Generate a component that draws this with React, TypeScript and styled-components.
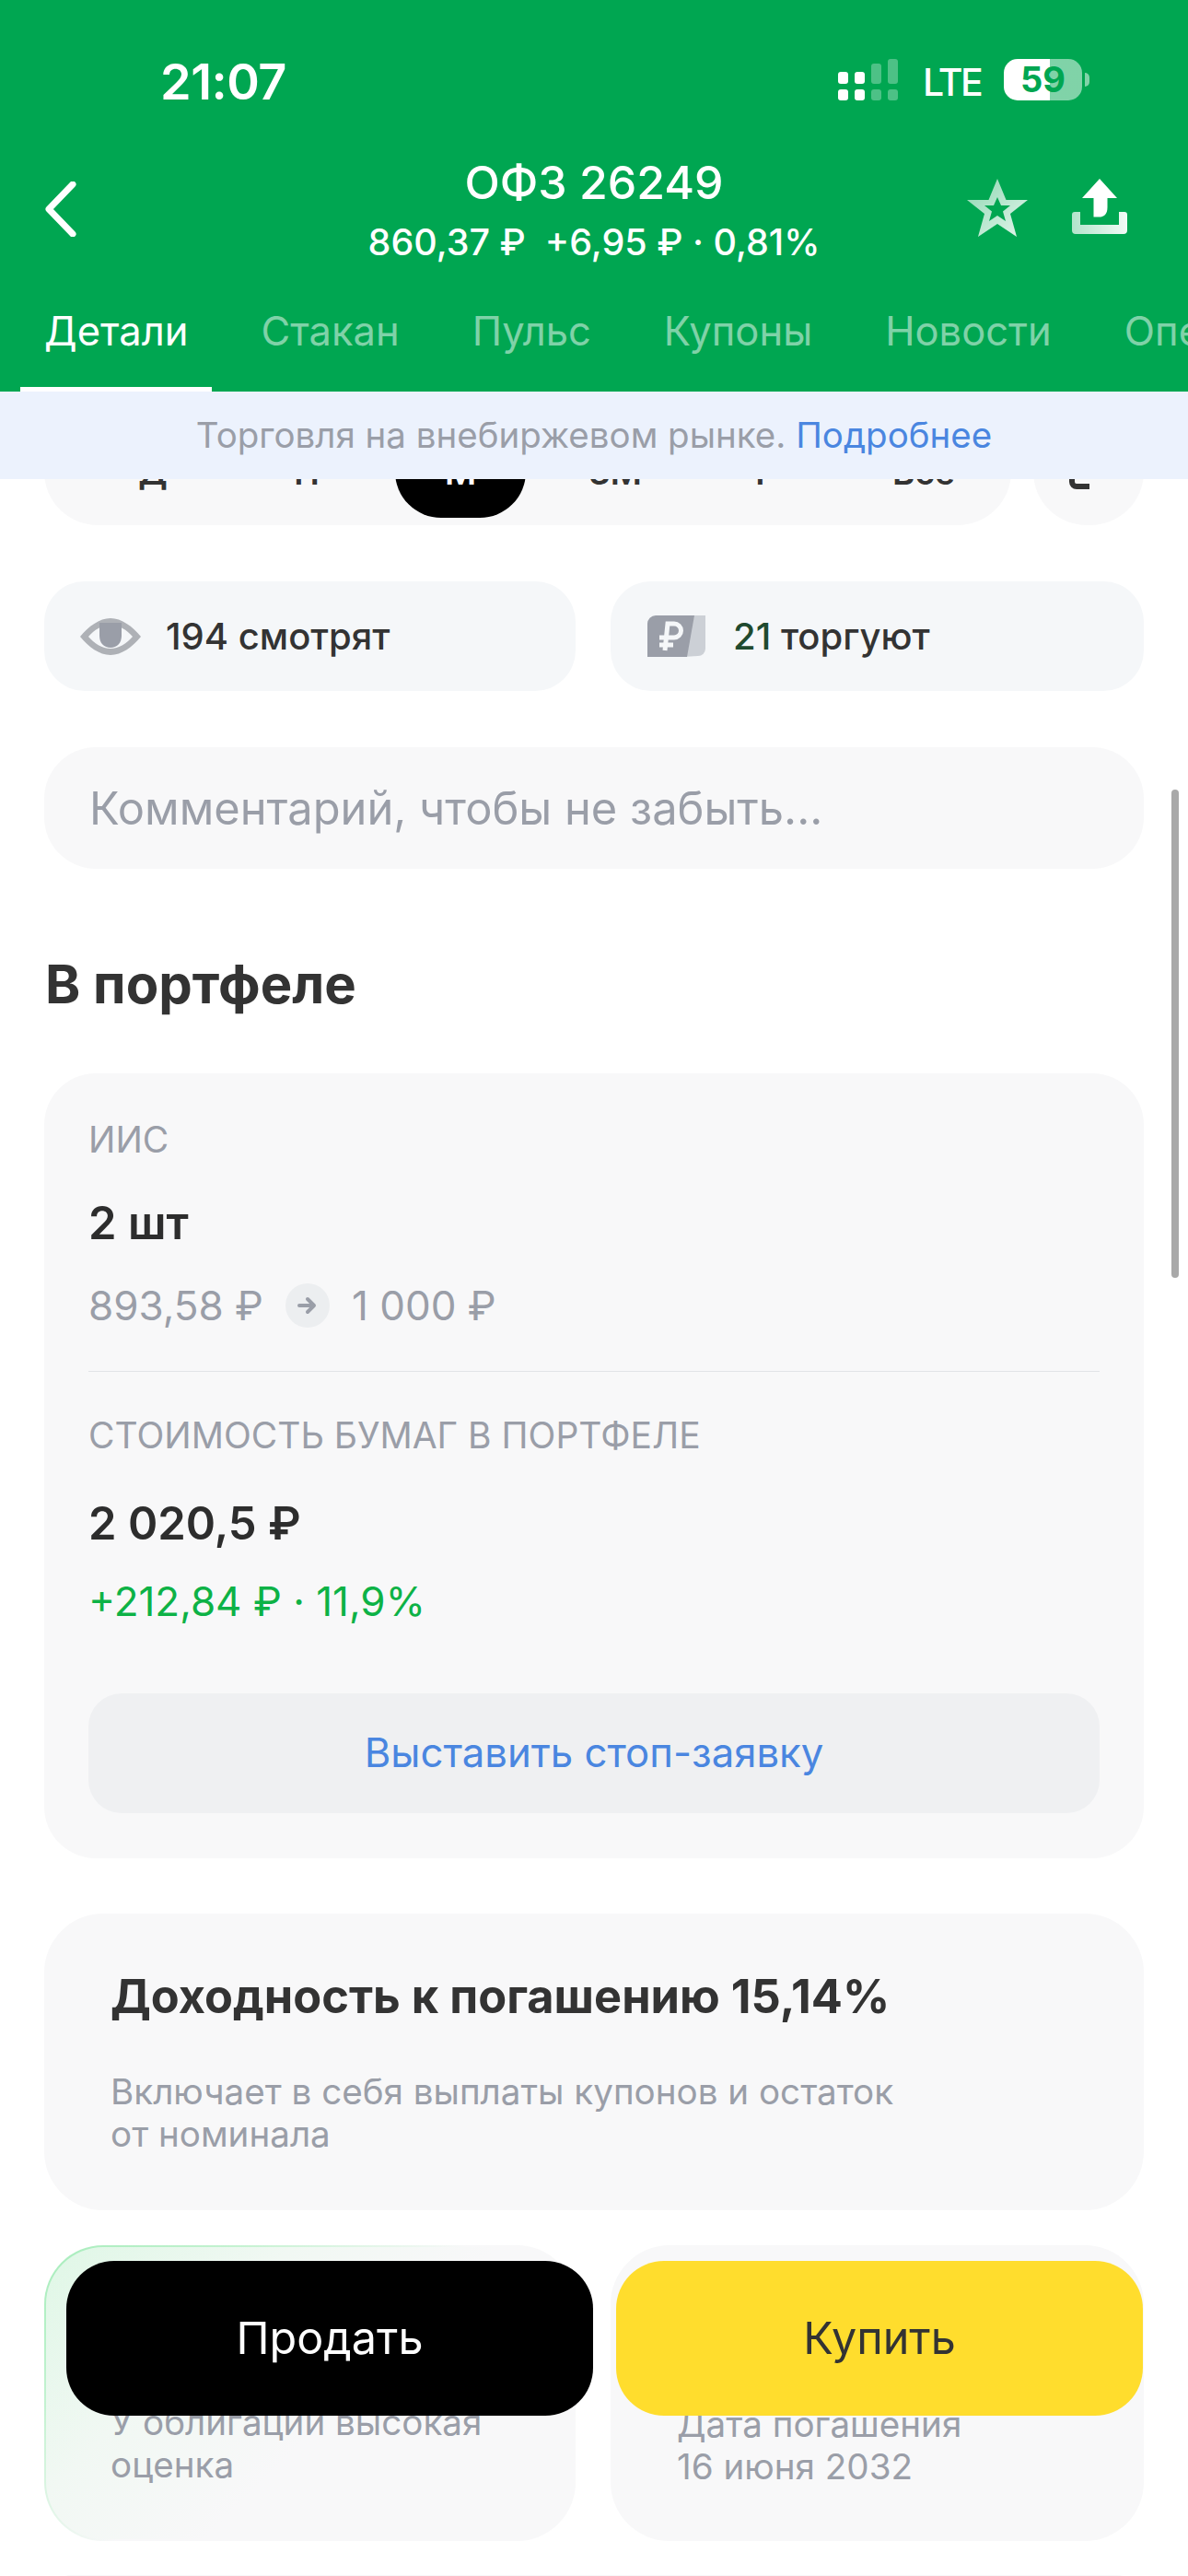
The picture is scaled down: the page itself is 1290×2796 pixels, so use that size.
import React from "react";
import styled, { createGlobalStyle } from "styled-components";

const Global = createGlobalStyle`
  html, body { margin: 0; padding: 0; background: #fff; }
  body { font-family: Inter, "Noto Sans", sans-serif; color: #333; }
  * { box-sizing: border-box; }
`;

const Page = styled.div`
  position: relative;
  width: 1290px;
  height: 2796px;
  overflow: hidden;
  background: #fff;
`;

const Top = styled.header`
  position: relative;
  z-index: 2;
  background: #00a651;
  height: 425px;
  color: #fff;
  display: flex;
  flex-direction: column;
`;

const StatusBar = styled.div`
  height: 172px;
  padding: 64px 115px 0 174px;
  display: flex;
  justify-content: space-between;
  align-items: flex-start;
`;

const Time = styled.div`
  font-size: 54px;
  line-height: 50px;
  font-weight: 600;
  letter-spacing: -0.5px;
`;

const StatusRight = styled.div`
  display: flex;
  align-items: center;
  height: 45px;
`;

const Lte = styled.div`
  font-size: 41px;
  line-height: 45px;
  font-weight: 500;
  margin: 5px 27px 0 27px;
  width: 61px;
  letter-spacing: -2.5px;
  white-space: nowrap;
`;

const Battery = styled.div`
  width: 85px;
  height: 45px;
  border-radius: 15px;
  background: linear-gradient(90deg, #fff 0 59%, rgba(255, 255, 255, 0.5) 59% 100%);
  color: #00a651;
  font-size: 38px;
  line-height: 45px;
  font-weight: 700;
  text-align: center;
  position: relative;
  &::after {
    content: "";
    position: absolute;
    left: 88px;
    top: 15px;
    width: 5px;
    height: 15px;
    border-radius: 0 5px 5px 0;
    background: rgba(255, 255, 255, 0.5);
  }
`;

const NavRow = styled.div`
  height: 110px;
  padding: 0 48px;
  display: grid;
  grid-template-columns: 1fr auto 1fr;
  align-items: start;
`;

const Back = styled.div`
  padding-top: 25px;
  display: flex;
`;

const Center = styled.div`
  text-align: center;
  margin-top: -2px;
`;

const Title = styled.div`
  font-size: 50px;
  line-height: 56px;
  font-weight: 500;
`;

const Sub = styled.div`
  font-size: 39.5px;
  line-height: 46px;
  font-weight: 500;
  margin-top: 14px;
  white-space: pre;
`;

const NavActions = styled.div`
  display: flex;
  justify-content: flex-end;
  gap: 48px;
  padding: 22px 18px 0 0;
`;

const Tabs = styled.nav`
  margin-top: 33px;
  padding-left: 22px;
  display: flex;
  gap: 27px;
  overflow: hidden;
  flex: 1;
`;

const Tab = styled.div<{ $active?: boolean }>`
  padding: 17px 26px 0;
  font-size: 43.5px;
  line-height: 54px;
  font-weight: 400;
  white-space: nowrap;
  flex: none;
  color: ${(p) => (p.$active ? "#fff" : "rgba(255,255,255,0.5)")};
  border-bottom: 5px solid ${(p) => (p.$active ? "#fff" : "transparent")};
`;

const Banner = styled.div`
  position: relative;
  z-index: 2;
  height: 95px;
  background: #ecf2fd;
  color: #9a9ea8;
  font-size: 38.5px;
  line-height: 95px;
  text-align: center;
`;

const Link = styled.span`
  color: #4a86e0;
`;

const Content = styled.main`
  padding: 0 48px;
  display: flex;
  flex-direction: column;
`;

const SegRow = styled.div`
  display: flex;
  gap: 24px;
  margin-top: -66px;
`;

const SegTrack = styled.div`
  width: 1050px;
  height: 116px;
  border-radius: 58px;
  background: #f8f8f9;
  position: relative;
`;

const SegItem = styled.div<{ $x: number; $active?: boolean }>`
  position: absolute;
  left: ${(p) => p.$x}px;
  top: 6px;
  width: 142px;
  height: 102px;
  border-radius: 50px;
  text-align: center;
  font-size: 37px;
  font-weight: 600;
  line-height: 106px;
  background: ${(p) => (p.$active ? "#000" : "transparent")};
  color: ${(p) => (p.$active ? "#fff" : "#333")};
`;

const SegSide = styled.div`
  width: 120px;
  height: 116px;
  border-radius: 58px;
  background: #f8f8f9;
  display: flex;
  padding: 66px 0 0 39px;
`;

const Chips = styled.div`
  display: grid;
  grid-template-columns: 577px 579px;
  gap: 38px;
  margin-top: 61px;
`;

const Chip = styled.div`
  height: 119px;
  border-radius: 44px;
  background: #f5f7f9;
  display: flex;
  align-items: center;
  font-size: 40px;
  font-weight: 500;
  color: #333;
`;

const ChipIcon = styled.div<{ $pad: number; $gap: number }>`
  display: flex;
  margin-left: ${(p) => p.$pad}px;
  margin-right: ${(p) => p.$gap}px;
`;

const DarkGreen = styled.span`
  color: #1f4a2f;
`;

const Comment = styled.div`
  margin-top: 61px;
  height: 132px;
  border-radius: 56px;
  background: #f8f8f9;
  padding-left: 49px;
  font-size: 48.8px;
  line-height: 134px;
  color: #9a9ea8;
`;

const Heading = styled.h2`
  margin: 90px 0 62px;
  padding-left: 1px;
  font-size: 58px;
  line-height: 70px;
  font-weight: 700;
  color: #333;
`;

const Card = styled.section`
  background: #f8f8f9;
  border-radius: 56px;
  padding: 47px 48px 49px;
`;

const Label = styled.div<{ $mt?: number }>`
  font-size: 39px;
  line-height: 50px;
  color: #9a9ea8;
  margin-top: ${(p) => p.$mt ?? 0}px;
`;

const Value = styled.div<{ $mt: number }>`
  font-size: 49px;
  line-height: 60px;
  font-weight: 600;
  color: #2d2d2d;
  margin-top: ${(p) => p.$mt}px;
`;

const PriceRow = styled.div`
  margin-top: 35px;
  height: 48px;
  display: flex;
  align-items: center;
  font-size: 44px;
  line-height: 48px;
  color: #9a9ea8;
  gap: 24px;
`;

const ArrowDot = styled.div`
  width: 48px;
  height: 48px;
  border-radius: 50%;
  background: #eceef0;
  display: flex;
  align-items: center;
  justify-content: center;
`;

const Divider = styled.div`
  margin-top: 47px;
  height: 1px;
  background: #e2e4e7;
`;

const Gain = styled.div`
  margin-top: 29px;
  font-size: 44px;
  line-height: 50px;
  color: #0db246;
`;

const StopButton = styled.div`
  margin-top: 75px;
  height: 130px;
  border-radius: 36px;
  background: #eff0f2;
  color: #4a86e0;
  font-size: 43.7px;
  line-height: 130px;
  text-align: center;
`;

const YieldCard = styled.section`
  margin-top: 60px;
  height: 322px;
  background: #f8f8f9;
  border-radius: 64px;
  padding: 60px 72px 0;
`;

const YieldTitle = styled.div`
  font-size: 50.5px;
  line-height: 60px;
  font-weight: 700;
  color: #333;
`;

const Desc = styled.div<{ $mt?: number }>`
  margin-top: ${(p) => p.$mt ?? 0}px;
  font-size: 38.6px;
  line-height: 46px;
  color: #9a9ea8;
`;

const InfoRow = styled.div`
  margin-top: 38px;
  display: grid;
  grid-template-columns: 577px 579px;
  gap: 38px;
`;

const InfoCard = styled.div<{ $glow?: boolean }>`
  height: 321px;
  border-radius: 64px;
  padding: 0 40px 58px 72px;
  display: flex;
  align-items: flex-end;
  background: #f8f8f9;
  ${(p) =>
    p.$glow
      ? `
    padding-left: 70px;
    border: 2px solid transparent;
    background:
      linear-gradient(135deg, #dff7e6 0, #f1f8f3 30%, #f8f8f9 55%) padding-box,
      linear-gradient(140deg, #a6edbb 0, #c4f2d1 22%, #f8f8f9 48%) border-box;
  `
      : ""}
`;

const NextCard = styled.div`
  margin-top: 37px;
  height: 60px;
  border-radius: 64px;
  background: #f8f8f9;
`;

const ActionBar = styled.div`
  position: absolute;
  left: 72px;
  bottom: 174px;
  z-index: 3;
  display: flex;
  gap: 25px;
`;

const Action = styled.div<{ $buy?: boolean }>`
  width: 572px;
  height: 168px;
  border-radius: 52px;
  background: ${(p) => (p.$buy ? "#ffdd2d" : "#000")};
  color: ${(p) => (p.$buy ? "#333" : "#fff")};
  font-size: 48.5px;
  line-height: 168px;
  text-align: center;
`;

const Scrollbar = styled.div`
  position: absolute;
  right: 10px;
  top: 857px;
  width: 8px;
  height: 530px;
  border-radius: 4px;
  background: #a9a9a9;
  z-index: 1;
`;

const Signal = () => (
  <svg width="65" height="45" viewBox="0 0 65 45" fill="#fff">
    <rect x="0" y="14" width="11" height="13" rx="3" />
    <rect x="18" y="14" width="11" height="13" rx="3" />
    <rect x="0" y="33" width="11" height="12" rx="3" />
    <rect x="18" y="33" width="11" height="12" rx="3" />
    <g opacity="0.3">
      <rect x="36" y="5" width="11" height="22" rx="3" />
      <rect x="54" y="0" width="11" height="27" rx="3" />
      <rect x="36" y="33" width="11" height="12" rx="3" />
      <rect x="54" y="33" width="11" height="12" rx="3" />
    </g>
  </svg>
);

const BackIcon = () => (
  <svg width="36" height="60" viewBox="0 0 36 60" fill="none">
    <path d="M31 3 5 30l26 27" stroke="#fff" strokeWidth="7" strokeLinecap="round" strokeLinejoin="round" />
  </svg>
);

const StarIcon = () => (
  <svg width="66" height="64" viewBox="0 0 66 64">
    <defs>
      <linearGradient id="starFill" x1="0" y1="0" x2="1" y2="1">
        <stop offset="0" stopColor="#fff" stopOpacity="0.55" />
        <stop offset="1" stopColor="#fff" stopOpacity="0.9" />
      </linearGradient>
    </defs>
    <path
      fillRule="evenodd"
      fill="url(#starFill)"
      d="M33 0l9.500 23H66L47 38l7 25-21-14-21 14 7-25L0 23h23.500zM33 20l-4 9h-10l8 6.500-3 10.500 9-6 9 6-3-10.500 8-6.500h-10z"
    />
  </svg>
);

const ShareIcon = () => (
  <svg width="60" height="60" viewBox="0 0 60 60">
    <defs>
      <linearGradient id="trayFill" x1="0" y1="0" x2="1" y2="0">
        <stop offset="0" stopColor="#fff" stopOpacity="0.7" />
        <stop offset="1" stopColor="#fff" stopOpacity="0.95" />
      </linearGradient>
    </defs>
    <path fill="#fff" d="M30 0l19 21H38.500v10c0 8-4 10.500-9 10.500h-6V21H11z" />
    <path
      fill="url(#trayFill)"
      d="M0 39a3 3 0 0 1 3-3h6v14h42V36h6a3 3 0 0 1 3 3v17a4 4 0 0 1-4 4H4a4 4 0 0 1-4-4z"
    />
  </svg>
);

const EyeIcon = () => (
  <svg width="66" height="40" viewBox="0 0 66 40">
    <path
      fillRule="evenodd"
      fill="#aeb1b6"
      d="M33 0c12 0 24 9 33 20-9 11-21 20-33 20S9 31 0 20C9 9 21 0 33 0zM33 7C24 7 15 13 9 20c6 7 15 13 24 13s18-6 24-13C51 13 42 7 33 7z"
    />
    <path fill="#9a9ea8" d="M21 5h24v14c0 8-5 13-12 13S21 27 21 19z" />
  </svg>
);

const RubleIcon = () => (
  <svg width="63" height="45" viewBox="0 0 63 45">
    <path fill="#ccd0d6" d="M46 0h17v36a8 8 0 0 1-8 8l-17 1z" />
    <path fill="#9a9ea8" d="M9 0h42l-8 45H0V9a9 9 0 0 1 9-9z" />
    <path
      d="M19 38l3-29h7a7.500 7.500 0 0 1 0 15H13M13 32h15"
      fill="none"
      stroke="#f5f7f9"
      strokeWidth="5"
    />
  </svg>
);

const ArrowIcon = () => (
  <svg width="24" height="20" viewBox="0 0 24 20" fill="none">
    <path d="M3 10h16M12 3l7 7-7 7" stroke="#9a9ea8" strokeWidth="4" strokeLinecap="round" strokeLinejoin="round" />
  </svg>
);

const segs = [
  { l: "Д", x: 47 },
  { l: "Н", x: 214 },
  { l: "М", x: 381, active: true },
  { l: "3М", x: 549 },
  { l: "Г", x: 712 },
  { l: "Всё", x: 884 },
];

export default function App() {
  return (
    <Page>
      <Global />
      <Top>
        <StatusBar>
          <Time>21:07</Time>
          <StatusRight>
            <Signal />
            <Lte>LTE</Lte>
            <Battery>59</Battery>
          </StatusRight>
        </StatusBar>
        <NavRow>
          <Back>
            <BackIcon />
          </Back>
          <Center>
            <Title>ОФЗ 26249</Title>
            <Sub>860,37 ₽  +6,95 ₽ · 0,81%</Sub>
          </Center>
          <NavActions>
            <StarIcon />
            <ShareIcon />
          </NavActions>
        </NavRow>
        <Tabs>
          <Tab $active>Детали</Tab>
          <Tab>Стакан</Tab>
          <Tab>Пульс</Tab>
          <Tab>Купоны</Tab>
          <Tab>Новости</Tab>
          <Tab>Операции</Tab>
        </Tabs>
      </Top>
      <Banner>
        Торговля на внебиржевом рынке. <Link>Подробнее</Link>
      </Banner>
      <Content>
        <SegRow>
          <SegTrack>
            {segs.map((s) => (
              <SegItem key={s.l} $x={s.x} $active={s.active}>
                {s.l}
              </SegItem>
            ))}
          </SegTrack>
          <SegSide>
            <svg width="24" height="12" viewBox="0 0 24 12" fill="none">
              <path d="M3 0v3a5 5 0 0 0 5 5h14" stroke="#333" strokeWidth="6" />
            </svg>
          </SegSide>
        </SegRow>
        <Chips>
          <Chip>
            <ChipIcon $pad={39} $gap={27}>
              <EyeIcon />
            </ChipIcon>
            194 смотрят
          </Chip>
          <Chip>
            <ChipIcon $pad={40} $gap={30}>
              <RubleIcon />
            </ChipIcon>
            <span>
              <DarkGreen>21</DarkGreen> торгуют
            </span>
          </Chip>
        </Chips>
        <Comment>Комментарий, чтобы не забыть...</Comment>
        <Heading>В портфеле</Heading>
        <Card>
          <Label>ИИС</Label>
          <Value $mt={36}>2 шт</Value>
          <PriceRow>
            <span>893,58 ₽</span>
            <ArrowDot>
              <ArrowIcon />
            </ArrowDot>
            <span>1 000 ₽</span>
          </PriceRow>
          <Divider />
          <Label $mt={44}>СТОИМОСТЬ БУМАГ В ПОРТФЕЛЕ</Label>
          <Value $mt={41}>2 020,5 ₽</Value>
          <Gain>+212,84 ₽ · 11,9%</Gain>
          <StopButton>Выставить стоп-заявку</StopButton>
        </Card>
        <YieldCard>
          <YieldTitle>Доходность к погашению 15,14%</YieldTitle>
          <Desc $mt={50}>
            Включает в себя выплаты купонов и остаток
            <br />
            от номинала
          </Desc>
        </YieldCard>
        <InfoRow>
          <InfoCard $glow>
            <Desc>
              У облигации высокая
              <br />
              оценка
            </Desc>
          </InfoCard>
          <InfoCard>
            <Desc>
              Дата погашения
              <br />
              16 июня 2032
            </Desc>
          </InfoCard>
        </InfoRow>
        <NextCard />
      </Content>
      <ActionBar>
        <Action>Продать</Action>
        <Action $buy>Купить</Action>
      </ActionBar>
      <Scrollbar />
    </Page>
  );
}
